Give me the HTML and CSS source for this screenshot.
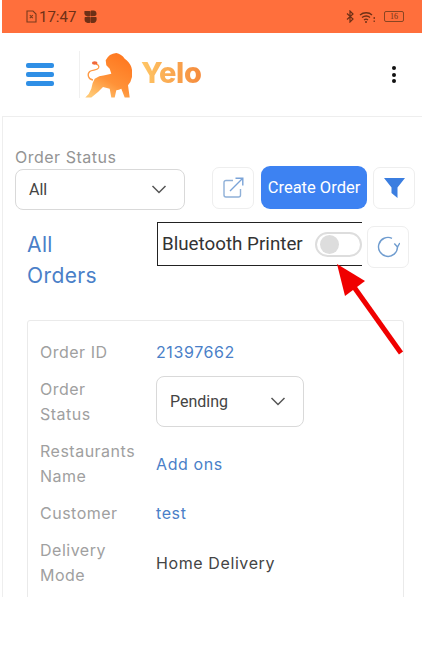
FILE: index.html
```html
<!DOCTYPE html>
<html lang="en">
<head>
    <meta charset="UTF-8" />
    <meta name="viewport" content="width=device-width, initial-scale=1.0" />
    <title>Yelo Orders</title>
    <link rel="stylesheet" href="styles.css">
</head>
<body>
    <div class="screen">
        <!-- Phone status bar -->
        <div class="status-bar">
            <div class="status-left">
                <svg class="sim-icon" width="11" height="13" viewBox="0 0 11 13"><path d="M1 1h6l3 3v8H1z M3.800 5.200l3 3 M6.800 5.200l-3 3" fill="none" stroke="#7a3a1c" stroke-width="1.100"/></svg>
                <span class="clock">17:47</span>
                <svg width="13" height="13" viewBox="0 0 13 13" fill="#6e3016"><path d="M1 1h4.500c.6 0 .9.400.9 1v3.600C6.400 6 6 6.400 5.500 6.400H3.500C1.800 6.400 .4 5 .4 3.300V1.600C.4 1.200.6 1 1 1z"/><path d="M7.500 .6h2c1.700 0 3 1.300 3 3v.4c0 1-.6 1.600-1.400 1.900L7 6.300c-.3 0-.5-.2-.5-.5V1.500c0-.6.400-.9 1-.9z"/><path d="M.6 8c0-.7.4-1 1-1h4c.5 0 .8.300.8.800v4.300c0 .5-.4.800-.9.800H3.600C1.900 12.900.6 11.500.6 9.800z"/><path d="M7 7h4.800c.5 0 .8.300.8.800v1.700c0 1.900-1.400 3.400-3.300 3.400H7.400c-.6 0-.9-.4-.9-1V7.500C6.500 7.200 6.700 7 7 7z"/></svg>
            </div>
            <div class="status-right">
                <svg width="8" height="13" viewBox="0 0 8 13"><path d="M1 3.500l6 5.500-3 3V1l3 3-6 5.500" fill="none" stroke="#6e3016" stroke-width="1.200"/></svg>
                <svg width="16" height="12" viewBox="0 0 16 12"><path d="M1 4c3.500-3 9-3 12 0 M3 6.500c2.500-2 6-2 8 0 M5 9c1.300-1 2.800-1 4 0" fill="none" stroke="#6e3016" stroke-width="1.300"/><circle cx="7" cy="11" r="1" fill="#6e3016"/><rect x="14.600" y="6" width="1.200" height="2" fill="#6e3016"/><rect x="14.600" y="9.500" width="1.200" height="1.500" fill="#6e3016"/></svg>
                <div class="battery"><span>16</span></div>
            </div>
        </div>

        <!-- Top header -->
        <header class="top-bar">
            <div class="hamburger"><span></span><span></span><span></span></div>
            <div class="logo">
                <svg class="lion" width="50" height="47" viewBox="0 0 50 47">
                    <defs>
                        <linearGradient id="lionFill" x1="0.75" y1="0.1" x2="0.2" y2="1">
                            <stop offset="0" stop-color="#ff7a22"/>
                            <stop offset="0.55" stop-color="#ff9238"/>
                            <stop offset="1" stop-color="#ffc874"/>
                        </linearGradient>
                    </defs>
                    <path d="M23.700 9.300Q27 2.500 34.300 2Q39.500 3 42.700 7.700Q47.500 11 49.300 16Q50.800 21 50 26Q49 31 46 34.300L47.700 46.500H42.700L39.300 37.700Q37 38.800 34.300 39.300L32.700 46.500H29.300L27.700 37.700L21 36L16 41L9.300 46.500H3.300Q7.500 43 9.300 37.700Q10 32 12.700 27.700Q17 24.800 22.700 24.300L29.300 22.700L27.700 17.700L24.300 14.300Z" fill="url(#lionFill)"/>
                    <path d="M11 29C6 28.500 5 23 7.700 20.500C10 18.500 15 19.500 16.500 17C17.500 15 16 13.500 14 13" fill="none" stroke="#ff9a45" stroke-width="1.300"/>
                    <ellipse cx="12.700" cy="12" rx="2.800" ry="1.700" fill="#f0683a"/>
                </svg>
                <span class="logo-text">Yelo</span>
            </div>
            <div class="kebab"><span></span><span></span><span></span></div>
        </header>

        <main class="panel">
            <div class="toolbar">
                <div class="status-field">
                    <label class="field-label">Order Status</label>
                    <div class="select select-status">
                        <span>All</span>
                        <svg width="16" height="9" viewBox="0 0 16 9"><path d="M1.500 1l6.500 6.500L14.500 1" fill="none" stroke="#555" stroke-width="1.500"/></svg>
                    </div>
                </div>
                <div class="toolbar-actions">
                    <button class="icon-btn">
                        <svg width="21" height="21" viewBox="0 0 21 21"><path d="M10 3.500H3a2 2 0 0 0-2 2V18a2 2 0 0 0 2 2h12.500a2 2 0 0 0 2-2v-6" fill="none" stroke="#8fb0d8" stroke-width="1.400"/><path d="M7 14L19.500 1.500 M12.500 1.200h7.300v7.300" fill="none" stroke="#7aa3d8" stroke-width="1.400"/></svg>
                    </button>
                    <button class="create-btn">Create Order</button>
                    <button class="icon-btn">
                        <svg width="21" height="20" viewBox="0 0 21 20"><path d="M0 0h21l-7.500 9.500V20l-6-5V9.500z" fill="#3b7ee0"/></svg>
                    </button>
                </div>
            </div>

            <div class="title-row">
                <h1 class="page-title">All<br>Orders</h1>
                <div class="printer-box">
                    <span>Bluetooth Printer</span>
                    <div class="toggle"><div class="knob"></div></div>
                </div>
                <button class="icon-btn refresh-btn">
                    <svg width="24" height="22" viewBox="-1 0 24 22"><path d="M15 2.300A9.500 9.500 0 1 0 20.500 11" fill="none" stroke="#6f9ccf" stroke-width="1.400"/><path d="M17.300 7.500l3.200 3.500 2.300-4" fill="none" stroke="#6f9ccf" stroke-width="1.400"/></svg>
                </button>
            </div>

            <section class="order-card">
                <div class="row">
                    <div class="row-label">Order ID</div>
                    <div class="row-value link">21397662</div>
                </div>
                <div class="row row-select">
                    <div class="row-label">Order<br>Status</div>
                    <div class="select select-pending">
                        <span>Pending</span>
                        <svg width="16" height="9" viewBox="0 0 16 9"><path d="M1.500 1l6.500 6.500L14.500 1" fill="none" stroke="#555" stroke-width="1.500"/></svg>
                    </div>
                </div>
                <div class="row">
                    <div class="row-label">Restaurants<br>Name</div>
                    <div class="row-value link">Add ons</div>
                </div>
                <div class="row">
                    <div class="row-label">Customer</div>
                    <div class="row-value link">test</div>
                </div>
                <div class="row">
                    <div class="row-label">Delivery<br>Mode</div>
                    <div class="row-value">Home Delivery</div>
                </div>
            </section>
        </main>

        <!-- Red annotation arrow -->
        <svg class="arrow" width="80" height="100" viewBox="0 0 80 100"><path d="M2 1L10 33 30 18z" fill="#f00000"/><path d="M19 24L66 90" stroke="#f00000" stroke-width="5" fill="none"/></svg>
    </div>
</body>
</html>
```

FILE: styles.css
```css
* {
    box-sizing: border-box;
}

body {
    margin: 0;
    background: #fff;
    font-family: "Inter", "Liberation Sans", sans-serif;
}

.screen {
    position: relative;
    height: 597px;
    padding-left: 2px;
    overflow: hidden;
}

/* Status bar */
.status-bar {
    display: flex;
    justify-content: space-between;
    align-items: center;
    height: 33px;
    padding: 0 18px 0 24px;
    background-color: #ff6f3c;
}

.status-left,
.status-right {
    display: flex;
    align-items: center;
}

.status-left {
    gap: 2px;
    color: #6e3016;
}

.clock {
    margin-right: 6px;
    font-family: "Roboto", sans-serif;
    font-size: 15px;
}

.status-right {
    gap: 5px;
}

.battery {
    display: flex;
    justify-content: center;
    align-items: center;
    width: 20px;
    height: 11px;
    margin-left: 4px;
    border: 1px solid #8a4522;
    border-radius: 2px;
    color: #6e3016;
    font-family: "Liberation Serif", serif;
    font-size: 8px;
}

/* Header */
.top-bar {
    display: flex;
    align-items: center;
    height: 84px;
    padding: 0 24px;
    border-bottom: 1px solid #eee;
}

.hamburger {
    display: flex;
    flex-direction: column;
    gap: 4px;
    width: 28px;
}

.hamburger span {
    height: 5px;
    border-radius: 2px;
    background-color: #2f8fe6;
}

.logo {
    display: flex;
    align-items: center;
    flex: 1;
    margin-left: 25px;
    padding-left: 2px;
    border-left: 1px solid #f0f0f0;
}

.logo-text {
    margin-bottom: 5px;
    margin-left: 9px;
    background: linear-gradient(90deg, #ffc766, #f58a3c);
    -webkit-background-clip: text;
    background-clip: text;
    color: transparent;
    font-size: 29px;
    font-weight: 800;
    letter-spacing: -0.3px;
}

.kebab {
    display: flex;
    flex-direction: column;
    gap: 2.500px;
    margin-right: 2px;
}

.kebab span {
    width: 4px;
    height: 4px;
    border-radius: 50%;
    background-color: #111;
}

/* Main panel */
.panel {
    height: 480px;
    padding: 32px 7px 0 12px;
    border-left: 1px solid #eee;
}

.toolbar {
    display: flex;
    align-items: flex-end;
}

.field-label {
    display: block;
    margin-bottom: 3px;
    color: #949494;
    font-size: 16px;
    letter-spacing: 0.5px;
    line-height: 17px;
}

.select {
    display: flex;
    justify-content: space-between;
    align-items: center;
    border: 1px solid #d9d9d9;
    border-radius: 8px;
    background: #fff;
    color: #444;
    font-family: "Roboto", sans-serif;
    font-size: 16px;
}

.select-status {
    width: 170px;
    height: 41px;
    padding: 0 17px 0 13px;
}

.select-pending {
    width: 148px;
    height: 51px;
    padding: 0 17px 0 13px;
}

.toolbar-actions {
    display: flex;
    gap: 6px;
    align-items: center;
    margin-left: 27px;
    margin-bottom: 1px;
}

.icon-btn {
    display: flex;
    justify-content: center;
    align-items: center;
    width: 42px;
    height: 42px;
    padding: 0;
    border: 1px solid #eee;
    border-radius: 7px;
    background: #fff;
}

.create-btn {
    width: 106px;
    height: 43px;
    margin-left: 1px;
    padding: 0;
    border: 0;
    border-radius: 9px;
    background-color: #3d82f2;
    color: #fff;
    font-family: "Roboto", sans-serif;
    font-size: 16.500px;
}

.title-row {
    display: flex;
    align-items: flex-start;
    margin-top: 12px;
}

.page-title {
    width: 130px;
    margin: 7px 0 0 12px;
    color: #4a7fc8;
    font-size: 21px;
    font-weight: 400;
    letter-spacing: 0.4px;
    line-height: 31px;
}

.printer-box {
    display: flex;
    justify-content: space-between;
    align-items: center;
    width: 205px;
    height: 44px;
    padding-left: 4px;
    border: solid #222;
    border-width: 1px 0 1px 1px;
    color: #333;
    font-family: "Roboto", sans-serif;
    font-size: 18.800px;
}

.toggle {
    width: 47px;
    height: 25px;
    padding: 1px 3px;
    border: 2px solid #ddd;
    border-radius: 13px;
    background: #fff;
}

.knob {
    width: 19px;
    height: 19px;
    border-radius: 50%;
    background-color: #ddd;
}

.refresh-btn {
    margin-top: 4px;
    margin-left: 5px;
}

/* Order card */
.order-card {
    height: 300px;
    margin: 29px 11px 0 12px;
    padding: 19px 12px;
    border: 1px solid #eaeaea;
    border-radius: 3px;
}

.row {
    display: flex;
    align-items: center;
    margin-bottom: 12px;
}

.row:first-child {
    margin-bottom: 11px;
}

.row-label {
    width: 116px;
    flex-shrink: 0;
    color: #a0a0a0;
    font-size: 16px;
    letter-spacing: 0.5px;
    line-height: 25px;
}

.row-value {
    color: #444;
    font-size: 16px;
    letter-spacing: 0.6px;
    line-height: 25px;
}

.row-value.link {
    color: #4a7fc8;
}

.arrow {
    position: absolute;
    left: 335px;
    top: 263px;
}
```
